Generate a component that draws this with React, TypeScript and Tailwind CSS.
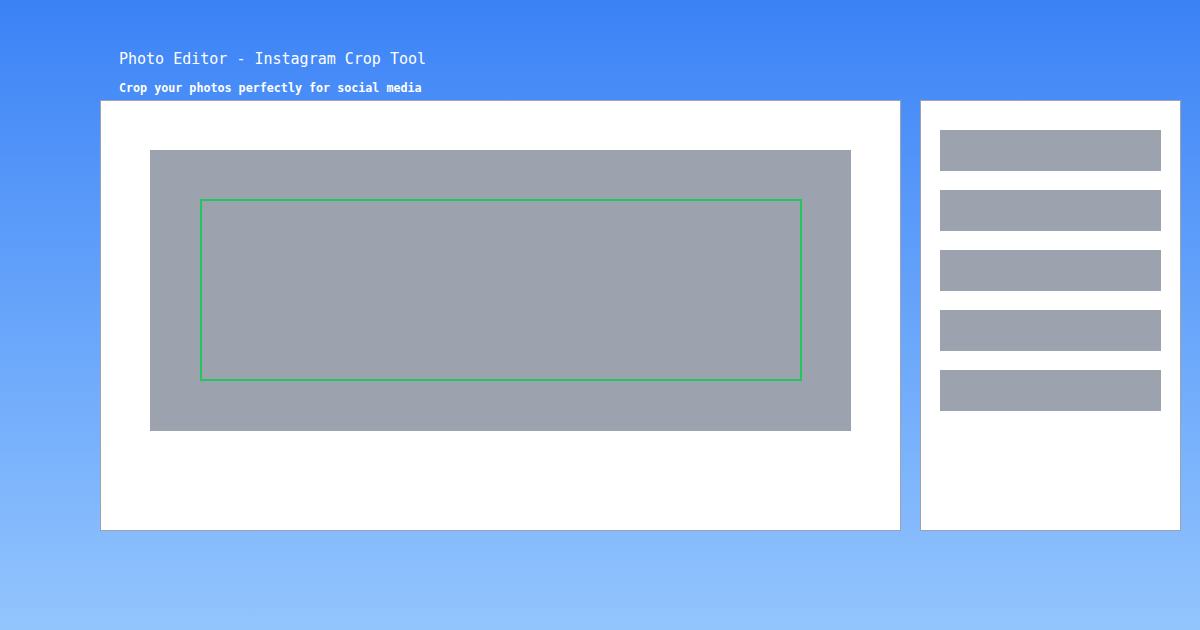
export default function App() {
  const bars = [0, 1, 2, 3, 4];
  return (
    <div className="w-[1200px] h-[630px] bg-gradient-to-b from-[#3b82f6] to-[#93c5fd] overflow-hidden" style={{ fontFamily: '"DejaVu Sans Mono", monospace' }}>
      <div className="pt-[47px] pl-[119px] text-white">
        <div className="text-[15px] leading-[24px] h-[24px]">Photo Editor - Instagram Crop Tool</div>
        <div className="text-[11.7px] font-bold leading-[16px] mt-[9px]">Crop your photos perfectly for social media</div>
      </div>
      <div className="flex gap-[19px] pl-[100px] mt-[4px]">
        <div className="w-[801px] h-[431px] bg-white border border-[#9ca3af] pt-[49px] pl-[49px]">
          <div className="w-[701px] h-[281px] bg-[#9ca3af] pt-[49px] pl-[50px]">
            <div className="w-[602px] h-[182px] border-2 border-[#22c55e]" />
          </div>
        </div>
        <div className="w-[261px] h-[431px] bg-white border border-[#9ca3af] pt-[29px] pl-[19px] flex flex-col gap-[19px]">
          {bars.map((i) => (
            <div key={i} className="w-[221px] h-[41px] bg-[#9ca3af]" />
          ))}
        </div>
      </div>
    </div>
  );
}
